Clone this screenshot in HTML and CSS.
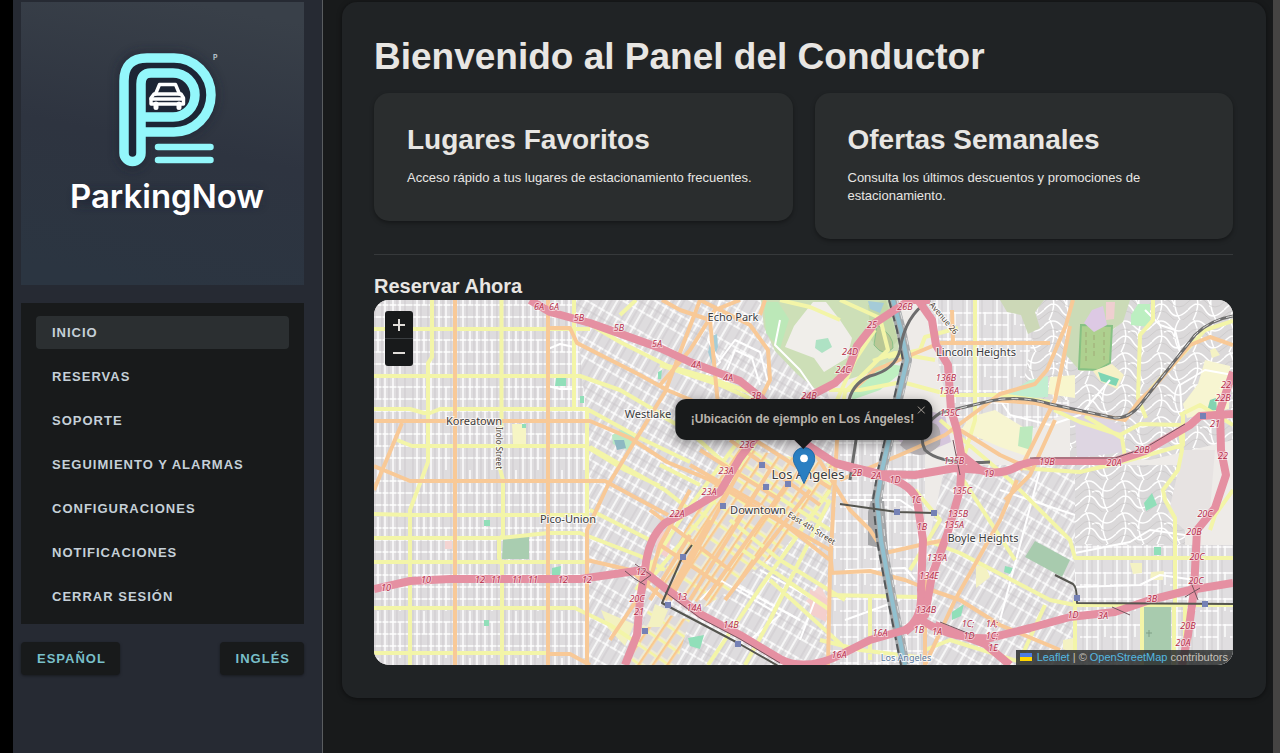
FILE: index.html
```html
<!DOCTYPE html>
<html lang="es">
<head>
<meta charset="utf-8">
<meta name="viewport" content="width=device-width, initial-scale=1">
<title>ParkingNow</title>
<link rel="stylesheet" href="styles.css">
</head>
<body>
<div class="app">
  <aside class="sidebar">
    <svg class="logo" viewBox="21 2 283 283" role="img" aria-label="ParkingNow">
      <defs>
        <linearGradient id="logoBg" x1="0.6" y1="0" x2="0.4" y2="1">
          <stop offset="0" stop-color="#394049"/><stop offset="0.5" stop-color="#2e3440"/><stop offset="1" stop-color="#2b3541"/>
        </linearGradient>
        <filter id="glow" x="-20%" y="-20%" width="140%" height="140%"><feGaussianBlur stdDeviation="5"/></filter>
      </defs>
      <rect x="21" y="2" width="283" height="283" fill="url(#logoBg)"/>
      <path d="M124 154V80Q124 58 146 58H174A37 37 0 0 1 174 132H141V154A8 8 0 0 1 124 154ZM76 198H260" fill="#1b2230" stroke="#1b2230" stroke-width="14" opacity=".55" filter="url(#glow)"/>
      <path d="M128 80Q128 62 146 62H174A33 33 0 0 1 174 128H141V154Q132 160 128 154Z" fill="#1d2535"/>
      <g fill="none" stroke="#93f7fb" stroke-width="9.5" stroke-linecap="butt">
        <path d="M141 132H174A37 37 0 0 0 174 58H147Q124 58 124 81V153A8.5 8.5 0 0 0 141 153V84Q141 73 151 73H173A22 22 0 0 1 173 117H141"/>
        <path d="M158 147H210.500M158 160H210.500" stroke-width="6.500" stroke-linecap="round"/>
      </g>
      <g fill="none" stroke="#fff" stroke-width="3.400" stroke-linejoin="round" stroke-linecap="round">
        <path d="M155.500 94L159.500 84.500H175.500L179.500 94"/>
        <path d="M154 94H181L183.500 98V104H151V98Z"/>
        <path d="M151 99H183.500"/>
        <path d="M156 104V107.500M179 104V107.500" stroke-width="5"/>
      </g>
      <text class="logo-mark" x="213" y="60">P</text>
      <text class="logo-name" x="167" y="208" text-anchor="middle">ParkingNow</text>
    </svg>
    <nav class="menu" aria-label="Principal">
      <a class="menu-item active" href="#inicio" aria-current="page">Inicio</a>
      <a class="menu-item" href="#reservas">Reservas</a>
      <a class="menu-item" href="#soporte">Soporte</a>
      <a class="menu-item" href="#seguimiento">Seguimiento y alarmas</a>
      <a class="menu-item" href="#configuraciones">Configuraciones</a>
      <a class="menu-item" href="#notificaciones">Notificaciones</a>
      <a class="menu-item" href="#salir">Cerrar sesión</a>
    </nav>
    <div class="languages">
      <button class="language" type="button">Español</button>
      <button class="language" type="button">Inglés</button>
    </div>
  </aside>
  <main class="content">
    <div class="panel">
      <h1>Bienvenido al Panel del Conductor</h1>
      <div class="cards">
        <section class="card"><h2>Lugares Favoritos</h2><p>Acceso rápido a tus lugares de estacionamiento frecuentes.</p></section>
        <section class="card"><h2>Ofertas Semanales</h2><p>Consulta los últimos descuentos y promociones de estacionamiento.</p></section>
      </div>
      <hr>
      <h3>Reservar Ahora</h3>
      <div class="map">
        <svg class="tiles" viewBox="374 300 859 365" preserveAspectRatio="xMidYMid slice" role="img" aria-label="Mapa de Los Ángeles">
          <defs>
            <pattern id="gridA" width="46" height="47" patternUnits="userSpaceOnUse" x="455" y="329">
              <rect width="46" height="47" fill="#dedcde"/>
              <path d="M0 11H46M0 23H46M0 35H46M8 0V47M15 0V23M22 0V47M30 0V47M37 11V47" stroke="#fff" stroke-width="1.400"/>
              <path d="M4 0V47M12 0V47M19 0V47M26 0V47M34 0V47M42 0V47" stroke="#c4c1c4" stroke-width=".7"/>
            </pattern>
            <pattern id="gridB" width="27" height="34" patternUnits="userSpaceOnUse" patternTransform="rotate(30)">
              <rect width="27" height="34" fill="#dedcde"/>
              <path d="M0 1H27M0 17H27M1 0V34M10 0V34M19 0V17" stroke="#fff" stroke-width="1.500"/>
              <path d="M5 0V34M14 0V34M23 0V34M0 9H27" stroke="#c4c1c4" stroke-width=".7"/>
            </pattern>
            <pattern id="gridC" width="30" height="26" patternUnits="userSpaceOnUse">
              <rect width="30" height="26" fill="#e0dee0"/>
              <path d="M0 1H30M0 13H18M7 0V26M18 0V26M25 0V13" stroke="#fff" stroke-width="1.400"/>
              <path d="M3 0V26M12 0V26M22 0V26" stroke="#c8c5c8" stroke-width=".7"/>
            </pattern>
            <pattern id="curvy" width="36" height="32" patternUnits="userSpaceOnUse">
              <rect width="36" height="32" fill="#dbd9da"/>
              <path d="M0 6Q9-4 18 6T36 6M0 22Q10 10 17 22T36 22M6 0Q14 16 5 32M27 0Q18 14 28 32M12 12Q22 8 22 19" fill="none" stroke="#fff" stroke-width="1.500"/>
              <path d="M0 14Q9 4 18 14T36 14M0 28Q10 18 18 28T36 28" fill="none" stroke="#c8c5c6" stroke-width=".7"/>
            </pattern>
            <pattern id="downtown" width="12" height="16" patternUnits="userSpaceOnUse" patternTransform="rotate(34)">
              <rect width="12" height="16" fill="#eeead4"/>
              <rect x="3" y="3" width="7" height="11" fill="#dedada"/>
              <path d="M0 1H12" stroke="#f4f4a4" stroke-width="3"/><path d="M1 0V16" stroke="#f9c98f" stroke-width="3"/>
            </pattern>
          </defs>
          <rect x="374" y="300" width="859" height="365" fill="#eeebe8"/>
          <path d="M374 300H590V665H374Z" fill="url(#gridA)"/>
          <path d="M574 300H790L830 400L860 470L845 665H587V420Z" fill="url(#gridB)"/>
          <path d="M840 400H925V665H830V470Z" fill="url(#gridC)"/>
          <path d="M925 300H1072V410L1010 440H955Z" fill="url(#gridC)"/>
          <path d="M1040 300H1233V440L1150 460L1070 460V400H1020Z" fill="url(#curvy)"/>
          <path d="M945 465H1075V665H925V560Z" fill="url(#gridB)"/>
          <path d="M1075 465H1185V545H1075Z" fill="url(#curvy)"/>
          <path d="M1075 545H1233V665H1075Z" fill="url(#gridC)"/>
          <path d="M1183 450H1215L1210 510L1190 535L1168 515Z" fill="#e7e3e2"/>
          <path d="M735 447L835 465L828 510L737 585L705 607L660 580L685 530Z" fill="url(#downtown)"/>
          <path d="M648 610L690 620L676 665H630Z" fill="url(#downtown)"/>

          <g class="areas">
            <path d="M761 300H892L900 335L897 362L872 372L840 382L822 394L797 374L775 351L764 327Z" fill="#cddfb7"/>
            <path d="M764 302H778L789 319L780 349L766 333Z" fill="#bce8b8"/>
            <path d="M805 312L813 302H826L840 320L852 338L847 358L824 372L814 358L785 347L794 326Z" fill="#f0eeea"/>
            <path d="M816 340L828 338L832 347L822 353L815 348Z" fill="#aee2c4"/>
            <path d="M868 305L886 300L898 340L885 355L871 340Z" fill="#c3d8a9"/>
            <path d="M877 325Q894 335 893 348Q884 358 874 345Z" fill="#b9c795" stroke="#8cc18a"/>
            <path d="M868 301L884 303L880 313L870 309Z" fill="#a5cbd7"/>
            <path d="M851 388L884 363L908 367L880 390L852 400Z" fill="#bfefc1"/>
            <path d="M1000 300H1044L1035 312L1040 328L1028 334L1021 315L1007 312Z" fill="#ccd8b7"/>
            <path d="M1070 300H1130L1123 322L1112 330V346L1098 370L1080 371L1066 355Z" fill="#cbdbb7"/>
            <path d="M1081 325L1112 326L1110 363L1098 370L1079 369Z" fill="#aed08f" stroke="#86c184" stroke-width="2"/>
            <path d="M1086 332V362M1094 335V358M1104 332V360" fill="none" stroke="#a0aa76" stroke-dasharray="5 3"/>
            <path d="M1092 310L1103 306L1107 325L1094 332L1084 323Z" fill="#ddc9e4"/>
            <path d="M1106 302H1115L1114 319L1106 320Z" fill="#efcfd0"/>
            <path d="M1138 304H1150V327L1131 325V315Z" fill="#bcefc1"/>
            <path d="M1007 394L1030 380L1048 376V397L1030 398Z" fill="#c1eed0"/>
            <path d="M1050 377L1075 375V398L1048 394Z" fill="#f8f6cd"/>
            <path d="M970 417L995 410L1033 433L1026 456L1000 447L961 430Z" fill="#f7f5d1"/>
            <path d="M1020 427L1033 426L1031 450L1018 446Z" fill="#bce9bd"/>
            <path d="M1093 371L1112 364L1124 375L1117 389L1100 381Z" fill="#f6f1c6"/>
            <path d="M1098 372L1119 379L1116 386L1101 381Z" fill="#7ed5b4"/>
            <path d="M1205 360L1230 366L1229 409L1187 418L1183 404L1198 384Z" fill="#f7f5d1"/>
            <path d="M1210 400L1216 398L1217 410L1207 411Z" fill="#83d3b1"/>
            <path d="M1035 398L1085 410L1121 425L1124 452L1077 458L1075 420Z" fill="#ded6e2"/>
            <path d="M905 405L945 415L951 442L920 455L896 439Z" fill="#d5c6dc"/>
            <path d="M910 430Q945 410 940 445Q920 465 900 445Z" fill="#b5b0b3"/>
            <path d="M503 539L529 536V559H502Z" fill="#a9cdb0"/>
            <path d="M1035 541L1070 560L1062 577L1025 557Z" fill="#a8cbae"/>
            <path d="M1144 607H1171V665H1143Z" fill="#a8cbae"/>
            <path d="M1146 633H1152M1149 630V637" stroke="#7f9f85"/>
            <path d="M512 424H526V445H513Z" fill="#f6f5c4"/>
            <path d="M445 541H452V549H445ZM820 585L806 601L816 609L828 600Z" fill="#f4d4d2"/>
            <path d="M712 336L717 334L718 347L712 364L708 352Z" fill="#a5cdd7"/>
            <path d="M612 435L625 428L635 438L630 451L613 444Z" fill="#b9e8c5"/>
            <path d="M614 440L624 440L626 448L617 450Z" fill="#8db8c2"/>
            <path d="M660 530L672 534L667 558L655 550ZM810 589L828 600L826 622L810 614Z" fill="#f4cfcd"/>
            <path d="M655 604L668 610L661 627L648 627ZM601 610L634 624L625 646L608 628Z" fill="#f3f1c1"/>
            <path d="M522 424H526V428H522ZM556 378L566 376V386H555ZM484 520H490V526H484ZM484 620H489V626H484ZM552 568L561 566L560 576H552ZM580 396H584V403H580ZM658 372L662 370L661 379H658ZM688 638L704 635L700 649L690 646ZM1154 547H1161V555H1154ZM1005 566L1013 568L1010 574L1004 572ZM952 612L964 604L961 616L952 620ZM1152 493L1157 505L1146 511L1144 503Z" fill="#91dfb9"/>
            <path d="M1151 572L1164 571L1163 580H1150ZM1210 350L1215 348L1220 355L1212 358ZM976 566L985 565L990 577L976 588ZM1063 640L1075 638L1073 653L1063 649ZM1130 563H1142V573L1133 574Z" fill="#f4f2c3"/>
            <path d="M868 512L876 480L884 500L888 550L868 545Z" fill="#a4a4a6"/>
          </g>

          <g class="road white">
            <path d="M720 300L708 340L720 362L706 375M780 320L775 345L800 370L818 396M720 360L735 340L760 352L770 390M727 370L735 350L752 358L760 385M548 349L560 344L574 347M548 386L560 389L574 389M735 585L800 620M760 570L815 600L800 640M700 600L720 580L780 615L750 640M850 500H900L915 510M845 570L905 568L915 580M845 620L900 600M1000 490L1075 515M1040 470L1000 620M1075 553L1130 542L1150 530L1185 535M1075 587L1140 585L1160 575L1195 580M1145 310L1160 325L1175 330L1180 350M1000 400L1010 415L1050 425L1080 415L1110 380M1182 418L1180 385L1205 370L1233 375"/>
          </g>

          <g class="road yellow">
            <path d="M374 329H590M374 376H580L620 390L668 418M374 409H410L424 413H430L440 409H588M397 440L412 446H587M374 514L410 515H587M374 538H500L548 533H580L640 556L665 570M374 562H587M374 608H575L610 625L640 645M374 653H548M432 300V357L428 363V462L410 510V665M501.500 300V428M499 465L503 480V535L499 540V558L502 565V665M574 300V409M587 409V520M574 315L620 342L668 366L710 378L760 396M587 409L640 438L690 462M587 447L625 470L660 486M620 315L636 300M590 447L665 490L690 510M590 510L650 540M660 365L720 385L765 405M660 415L690 432L730 468L780 498L830 530M660 465L700 485M765 430L700 520L650 580M745 432L680 520L636 590M840 300L880 318L888 350L845 392L838 440M780 300L810 307L840 320M875 330L855 360L837 400M888 357L920 350L925 337L958 328M873 361L895 353L935 360M829 390L860 390L902 382L950 395M745 665L770 620L830 500M708 665L760 588L830 490M770 580L845 648M735 545L830 610M730 520L780 560L845 600M830 595L917 597M820 640L860 650L925 658M870 595V660M915 490L940 520L910 570M940 420L1010 480L1070 540L1075 558L1233 558M925 540L960 553L1050 600L1075 605M925 650L950 640L1030 665M1075 605H1233M1045 605L1020 660M1075 660V600M1142 605V665M1174 605V665M1185 605V665M1175 605V518L1165 500L1163 490L1178 470L1182 450L1180 425L1140 424L1120 435L1080 422L1054 410M1153 300V320L1140 335L1138 398L1146 418M975 300V420L960 470M940 395H1000L1050 402M1233 490L1215 515L1210 530M1085 416L1122 438L1126 463M1020 468L1080 472L1130 460L1183 445L1183 415M960 475L1015 560M1180 415L1200 405L1233 425M1150 390L1205 330L1233 321"/>
          </g>

          <g class="road orange">
            <path d="M455 300V665M548 300V665M587 665V530L608 485L665 392L700 300M374 421H590L630 438L667 462L710 480L760 510L830 550L832 572M374 466L410 481H605L640 500L668 515M374 490L402 423M548 328H570L577 343L640 375L667 390L720 412L800 432M587 560L630 570L665 600M548 654L570 654L590 665M660 385L690 350L715 310L740 300"/>
            <path d="M700 300L750 325L768 350L770 380L760 400M662 300L680 310L710 320M710 320L718 405M765 300L760 315M837 440L830 570L828 665M810 445L850 510L870 530L885 553L920 545L945 540M830 573L870 571L905 580L925 588L960 600L1000 625L1060 650M1017 480L1000 520L955 600L925 665M1055 420L1030 475L1005 500M1073 300L1066 325L1047 370L1035 384L1000 394L945 435L900 455L840 480M1070 326L1055 400L1035 440L1020 470M940 343L1050 343M953 343L952 310M960 430L1000 455L1033 470M993 400L1035 403L1055 408L1125 420L1140 400L1153 388L1190 345L1210 337L1233 345M855 388L875 370L935 345"/>
            <path d="M690 465L760 505L830 560M700 450L780 500M730 440L820 505M755 440L830 488M650 510L730 570M660 545L720 585M690 535L650 600M710 520L665 600M740 470L670 600M770 470L690 600M790 480L705 600M810 490L725 600"/>
            <path d="M925 575V665M610 640L650 580L660 545L690 490"/>
          </g>

          <g class="rail">
            <path class="river-bank" d="M893 300L901 330L907 360L900 390L890 435L882 470L877 500L881 540L892 600L905 665"/>
            <path class="river" d="M893 300L901 330L907 360L900 390L890 435L882 470L877 500L881 540L892 600L905 665"/>
            <path class="rail-dash" d="M897 300L905 330L911 360L904 390L894 435L886 470L881 500L885 540L896 600L909 665"/>
            <path class="rail-dark" d="M889 300L897 330L903 360L896 390L886 435L878 470L873 500L877 540L888 600L901 665"/>
            <path class="track" d="M930 300Q905 315 900 350Q895 370 870 376Q851 384 848 405L856 440L850 480M1233 316Q1210 320 1195 335L1140 405Q1130 418 1115 418L1050 404Q1020 395 990 401L940 413Q915 430 925 450Q940 465 990 462"/>
            <path class="rail-dash" d="M1233 316Q1210 320 1195 335L1140 405Q1130 418 1115 418L1050 404Q1020 395 990 401L940 413"/>
          </g>

          <g class="freeway">
            <path d="M530 300L550 312L590 323L635 339L660 348L690 362L740 381L760 397L800 440L835 463L880 474L915 475L955 468L980 470Q1000 477 1020 465L1035 461H1115L1145 451L1190 425L1200 416L1233 414"/>
            <path d="M930 300H910L875 323L857 346L848 370L835 383L808 397L780 425L755 438L740 458L720 492L690 510L665 523Q648 538 645 570L640 600L637 635L625 665"/>
            <path d="M374 589L410 581L450 579H580L615 574L642 570L665 588L700 614L740 635L780 659Q805 672 840 655L870 640L905 630Q923 620 921 590L923 540L917 500Q910 480 870 474L835 463"/>
            <path d="M918 300L932 320L936 345L948 365L951 410L957 430L962 460L960 490L947 535L932 575L925 615L905 632M918 618Q950 640 990 638L1030 628L1070 617L1115 612L1150 600L1190 590L1233 583M935 625L985 644L1010 665M980 470L958 452"/>
            <path d="M1233 372L1220 410L1221 450L1226 475L1215 508L1197 530L1194 590L1188 635L1182 665"/>
          </g>
          <path d="M625 571Q635 580 645 585M635 564L651 575L640 583M1112 607L1130 615M1190 580L1198 600M1185 597L1200 588M940 622L975 636M953 440L960 475M1030 458H1115L1145 448L1185 424M665 592L700 618L740 639L780 663" class="ramp"/>

          <g class="metro">
            <path d="M692 545L681 560L662 603L738 643L780 667M840 504L897 512L934 513M1055 575L1073 584Q1077 587 1077 603L1233 604"/>
          </g>
          <g class="station">
            <path d="M680 554h6v6h-6ZM665 602h6v6h-6ZM642 628h6v6h-6ZM735 641h6v6h-6ZM720 503h6v6h-6ZM759 462h6v6h-6ZM763 484h6v6h-6ZM785 481h6v6h-6ZM894 509h6v6h-6ZM931 510h6v6h-6ZM1074 595h6v6h-6ZM1202 601h6v6h-6ZM1200 413h6v6h-6Z"/>
          </g>

          <g class="exit">
            <text x="539" y="310">6A</text><text x="554" y="310">6A</text><text x="579" y="321">5B</text><text x="619" y="331">5B</text><text x="657" y="347">5A</text><text x="696" y="368">4A</text><text x="728" y="381">4A</text><text x="756" y="399">3B</text><text x="809" y="399">24B</text><text x="843" y="373">24C</text><text x="850" y="355">24D</text><text x="872" y="328">25</text><text x="905" y="310">26B</text>
            <text x="946" y="381">136B</text><text x="949" y="394">136A</text><text x="950" y="416">135C</text><text x="954" y="464">135B</text><text x="962" y="494">135C</text><text x="958" y="517">135B</text><text x="954" y="528">135A</text><text x="937" y="561">135A</text><text x="929" y="579">134E</text><text x="926" y="613">134B</text>
            <text x="747" y="448">23C</text><text x="726" y="474">23A</text><text x="709" y="495">23A</text><text x="677" y="517">22A</text><text x="857" y="476">2B</text><text x="876" y="479">2A</text><text x="895" y="483">1D</text><text x="916" y="503">1C</text><text x="922" y="530">1B</text>
            <text x="386" y="591">10</text><text x="426" y="583">10</text><text x="480" y="583">12</text><text x="496" y="583">11</text><text x="517" y="583">11</text><text x="533" y="583">11</text><text x="563" y="583">12</text><text x="587" y="583">12</text><text x="641" y="575">12</text><text x="637" y="602">20C</text><text x="639" y="615">21</text><text x="682" y="600">13</text><text x="694" y="611">14A</text><text x="731" y="628">14B</text><text x="839" y="658">16A</text><text x="880" y="636">16A</text><text x="919" y="633">1B</text><text x="937" y="635">1A</text><text x="968" y="627">1C;</text><text x="969" y="639">1D</text><text x="992" y="627">1A;</text><text x="992" y="639">1C;</text><text x="993" y="651">1E</text>
            <text x="989" y="477">19</text><text x="1047" y="465">19B</text><text x="1114" y="466">20A</text><text x="1142" y="453">20B</text><text x="1215" y="427">21</text><text x="1223" y="459">22</text><text x="1226" y="388">22</text><text x="1223" y="401">22B</text><text x="1205" y="517">20C</text><text x="1194" y="535">20B</text><text x="1197" y="560">20C</text><text x="1196" y="584">20C</text><text x="1188" y="629">20B</text><text x="1183" y="646">20A</text><text x="1152" y="602">3B</text><text x="1103" y="619">3A</text><text x="1073" y="618">1D</text>
          </g>
          <g class="street">
            <text transform="translate(496 427) rotate(90)">Irolo Street</text>
            <text transform="translate(787 516) rotate(32)">East 4th Street</text>
            <text transform="translate(929 305) rotate(50)">Avenue 26</text>
          </g>
          <g class="place">
            <text x="733" y="321">Echo Park</text><text x="976" y="356">Lincoln Heights</text><text x="648" y="418">Westlake</text><text x="474" y="425">Koreatown</text><text x="568" y="523">Pico-Union</text><text x="758" y="514">Downtown</text><text x="983" y="542">Boyle Heights</text>
            <text class="city" x="808" y="479">Los Ángeles</text>
            <text class="station-name" x="906" y="661">Los Angeles</text>
          </g>
        </svg>
        <svg class="pin" viewBox="0 0 25 41" aria-hidden="true">
          <path d="M12.500.5A12 12 0 0 0 .5 12.500C.5 17 2.500 20 5 24.500L12.500 40.500L20 24.500C22.500 20 24.500 17 24.500 12.500A12 12 0 0 0 12.500.5Z" fill="#2a7fc2" stroke="#2068a6"/>
          <circle cx="12.500" cy="12.500" r="4.300" fill="#fff"/>
        </svg>
        <div class="popup" role="dialog" aria-label="Ubicación">
          <strong>¡Ubicación de ejemplo en Los Ángeles!</strong>
          <button class="popup-close" type="button" aria-label="Cerrar"><svg viewBox="0 0 8 8" aria-hidden="true"><path d="M.5.5L7.500 7.500M7.500.5L.5 7.500"/></svg></button>
        </div>
        <div class="zoom">
          <button type="button" aria-label="Acercar"><svg viewBox="0 0 12 12" aria-hidden="true"><path d="M0 6H12M6 0V12"/></svg></button>
          <button type="button" aria-label="Alejar"><svg viewBox="0 0 12 12" aria-hidden="true"><path d="M0 6H12"/></svg></button>
        </div>
        <div class="attribution"><a href="#leaflet"><svg class="flag" viewBox="0 0 12 8" aria-hidden="true"><path d="M0 0H12V4H0Z" fill="#4c7be1"/><path d="M0 4H12V8H0Z" fill="#ffd500"/></svg> Leaflet</a> | © <a href="#osm">OpenStreetMap</a> contributors</div>
      </div>
    </div>
  </main>
  <div class="scroll-track" aria-hidden="true"></div>
</div>
</body>
</html>
```
FILE: styles.css
```css
* { box-sizing: border-box; }
body { margin: 0; background: #000; color: #e8e6e3; font-family: "Liberation Sans", Arial, sans-serif; font-size: 13px; line-height: 18px; }
h1, h2, h3, p { margin: 0; }
button { font: inherit; cursor: pointer; }

.app { display: flex; min-height: 100vh; padding-left: 13px; }

.sidebar { display: flex; flex-direction: column; gap: 18px; flex: 0 0 310px; padding: 2px 18px 18px 8px; background: #262a33; border-right: 1px solid #5a5d60; }
.logo { display: block; width: 100%; }
.logo-name { font: 600 33px Inter, "Open Sans", sans-serif; fill: #fff; }
.logo-mark { font: 700 7px Inter, sans-serif; fill: #b5c2ca; }
.menu { display: flex; flex-direction: column; gap: 11px; padding: 13px 15px 11px; background: #181a1b; }
.menu-item { padding: 0 16px; border-radius: 4px; color: #c5d0d8; font-size: 13px; font-weight: 700; line-height: 33px; letter-spacing: 1px; text-transform: uppercase; text-decoration: none; }
.menu-item.active { background: #2b2f31; }
.languages { display: flex; justify-content: space-between; }
.language { padding: 0 14px 0 16px; border: 0; border-radius: 4px; background: #181a1b; box-shadow: 0 1px 3px rgba(0, 0, 0, .4); color: #79bfc9; font-size: 13px; font-weight: 700; line-height: 33px; letter-spacing: 1px; text-transform: uppercase; }

.content { flex: 1; min-width: 0; padding: 2px 7px 20px 19px; background: #181a1b; }
.panel { padding: 32px 33px 33px 32px; border-radius: 15px; background: #202325; box-shadow: 0 1px 5px rgba(0, 0, 0, .5); }
h1 { margin-bottom: 13px; font-size: 37px; line-height: 46px; }
h2 { margin-bottom: 14px; font-size: 28px; line-height: 30px; }
h3 { margin-bottom: 2px; font-size: 20px; line-height: 24px; }
hr { height: 1px; margin: 15px 0 19px; border: 0; background: #36393b; }
.cards { display: grid; grid-template-columns: 1fr 1fr; gap: 22px; align-items: start; }
.card { padding: 32px 33px 34px; border-radius: 15px; background: #2a2d2e; box-shadow: 0 2px 4px rgba(0, 0, 0, .35); }

.map { position: relative; height: 365px; overflow: hidden; border-radius: 15px; font-size: 12px; }
.tiles { display: block; width: 100%; height: 100%; }
.road, .freeway, .metro, .rail, .ramp { fill: none; stroke-linejoin: round; }
.white { stroke: #fff; stroke-width: 2; }
.yellow { stroke: #f3f5a8; stroke-width: 4; }
.orange { stroke: #f8c997; stroke-width: 4; }
.freeway { stroke: #e590a2; stroke-width: 8; }
.ramp { stroke: #74565f; stroke-width: 1; }
.metro { stroke: #55554f; stroke-width: 2; }
.river-bank { stroke: #a5a8aa; stroke-width: 10; }
.river { stroke: #91c0cf; stroke-width: 4; }
.track { stroke: #6d6d6d; stroke-width: 3; }
.rail-dash { stroke: #dedede; stroke-width: 1; stroke-dasharray: 7 6; }
.rail-dark { stroke: #55585a; stroke-width: 2; stroke-dasharray: 9 4; }
.station { fill: #7581b5; }
.tiles text { paint-order: stroke; stroke: #fff; stroke-opacity: .75; stroke-width: 2px; font-family: "Noto Sans", sans-serif; }
.tiles .exit text { font-family: "Open Sans", sans-serif; stroke-opacity: .5; }
.exit { fill: #b52a48; font-size: 9px; font-style: italic; font-weight: 400; text-anchor: middle; }
.street { fill: #4a4030; font-size: 8px; }
.place { fill: #3c3c40; font-size: 11px; text-anchor: middle; }
.city { font-size: 13px; }
.station-name { fill: #5878a0; font-size: 9px; }

.pin { position: absolute; left: 50%; top: 147px; width: 23px; height: 37px; transform: translateX(-50%); }
.popup { position: absolute; left: 50%; bottom: 225px; padding: 0 18px 0 16px; border-radius: 11px; background: #181a1b; box-shadow: 0 3px 12px rgba(0, 0, 0, .4); color: #b8b3ab; line-height: 41px; white-space: nowrap; transform: translateX(-50%); }
.popup::after { content: ""; position: absolute; left: 50%; top: 100%; border: 9px solid transparent; border-top-color: #181a1b; border-bottom: 0; transform: translateX(-50%); }
.popup-close { position: absolute; top: 3px; right: 3px; display: grid; place-items: center; width: 16px; height: 16px; padding: 0; border: 0; background: none; }
.popup-close svg { width: 8px; height: 8px; fill: none; stroke: #a8a29a; }
.zoom { position: absolute; left: 11px; top: 11px; width: 28px; overflow: hidden; border-radius: 3px; background: #181a1b; }
.zoom button { display: grid; place-items: center; width: 100%; height: 27px; padding: 0; border: 0; background: none; }
.zoom button:first-child { height: 28px; border-bottom: 1px solid #3a3e41; }
.zoom svg { width: 12px; height: 12px; fill: none; stroke: #e0ddd9; stroke-width: 2; }
.attribution { position: absolute; right: 0; bottom: 0; padding: 0 5px 0 4px; background: rgba(40, 43, 44, .85); color: #c5c1bb; font-size: 11px; line-height: 15px; }
.attribution a { color: #54b8e0; text-decoration: none; }
.flag { width: 12px; height: 8px; margin-right: 2px; }

.scroll-track { flex: 0 0 7px; background: #454443; }
```
